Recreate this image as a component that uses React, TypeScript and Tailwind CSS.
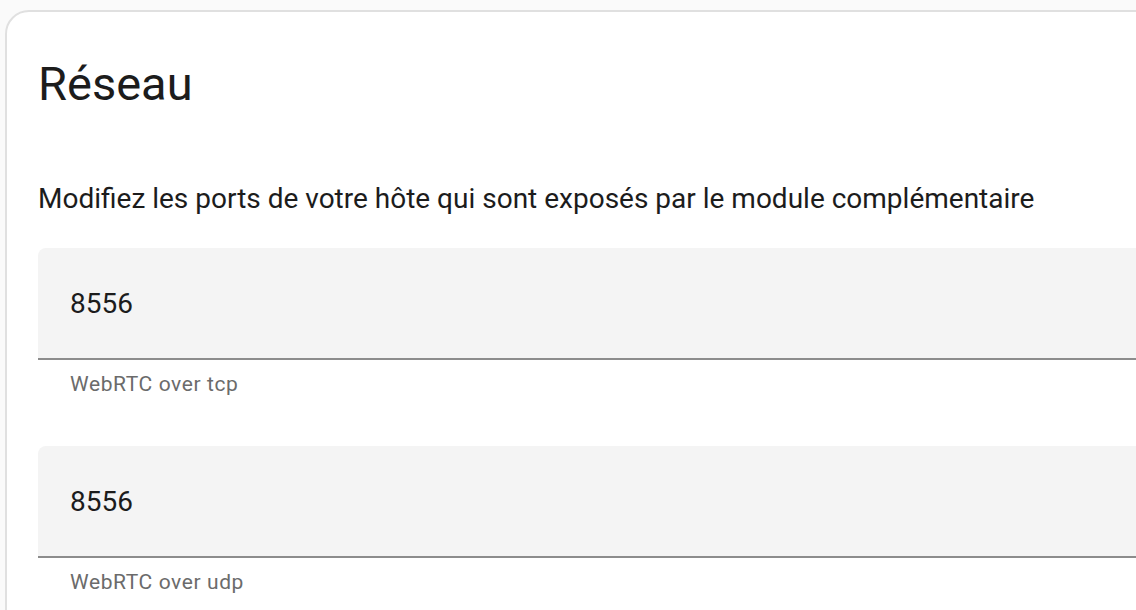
export default function App() {
  const fields = [
    { value: "8556", helper: "WebRTC over tcp" },
    { value: "8556", helper: "WebRTC over udp" },
  ];
  return (
    <div className="h-[610px] w-[1136px] overflow-hidden bg-[#fafafa] pl-[5px] pt-[10px] font-['Roboto',sans-serif]">
      <div className="min-h-[700px] w-[1200px] rounded-tl-[24px] border-2 border-[#e0e0e0] bg-white">
        <h1 className="px-[31px] pt-[40px] text-[47px] leading-[64px] font-normal text-[#1c1c1c]">Réseau</h1>
        <p className="mt-[65px] px-[31px] text-[28px] leading-[36px] text-[#1c1c1c]">
          Modifiez les ports de votre hôte qui sont exposés par le module complémentaire
        </p>
        <div className="mt-[31px] flex flex-col gap-[48px] pl-[31px]">
          {fields.map((f, i) => (
            <div key={i}>
              <div className="flex h-[112px] items-center rounded-t-[8px] border-b-2 border-[#8c8c8c] bg-[#f4f4f4] px-[32px] pt-[2px] text-[28px] text-[#1c1c1c]">
                {f.value}
              </div>
              <div className="px-[32px] pt-[10px] text-[21px] leading-[28px] tracking-[0.6px] text-[#6b6b6b]">
                {f.helper}
              </div>
            </div>
          ))}
        </div>
      </div>
    </div>
  );
}
